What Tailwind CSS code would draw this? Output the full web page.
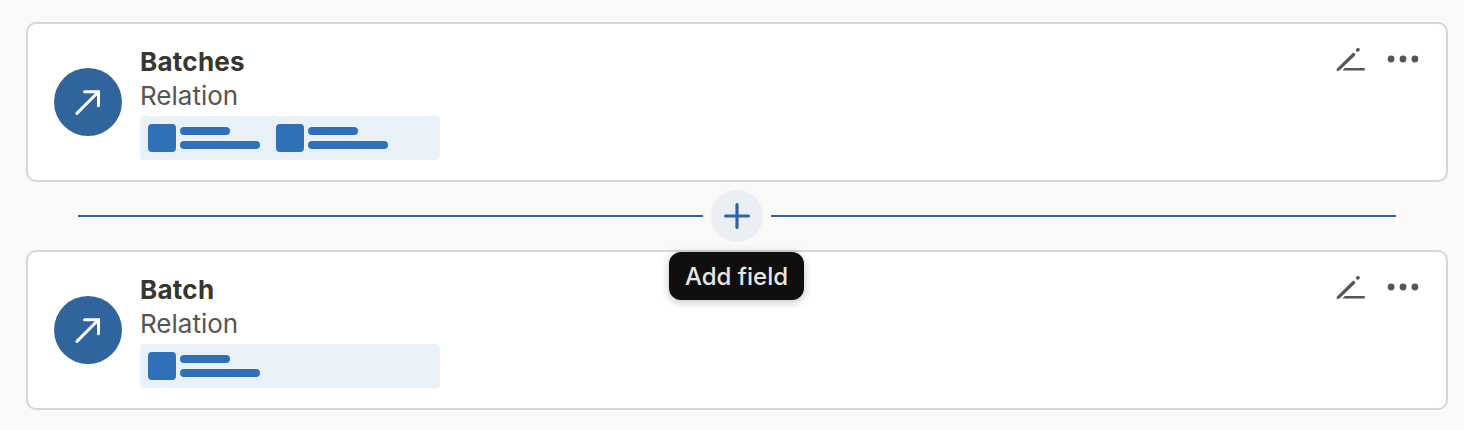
<!DOCTYPE html>
<html lang="en">
<head>
  <meta charset="UTF-8" />
  <meta name="viewport" content="width=device-width, initial-scale=1.0"/>
  <title>Fields</title>
  <script src="https://cdn.jsdelivr.net/npm/@tailwindcss/browser@4"></script>
</head>
<body class="bg-[#f9f9f7] font-['Inter','Liberation_Sans',sans-serif] text-[#56554f]">
  <main class="pt-[22px] pl-[26px] pr-4">

    <section class="flex h-40 items-center rounded-[10px] border-2 border-[#d1d7dd] bg-white py-5 pr-7 pl-[26px]">
      <div class="flex size-[68px] shrink-0 items-center justify-center rounded-full bg-[#2f649d]">
        <svg class="size-[68px]" viewBox="0 0 68 68" fill="none" stroke="#fff" stroke-width="3" stroke-linecap="round" stroke-linejoin="miter">
          <path d="M22.9 45.4 44.5 23.8M30.6 23.8H44.5V37.7"/>
        </svg>
      </div>
      <div class="ml-[18px] grow">
        <h2 class="h-[34px] text-[26px] leading-[36px] font-bold tracking-[0.26px] text-[#37362f]"><span>Batches</span></h2>
        <p class="h-[34px] text-[26px] leading-[36px]"><span>Relation</span></p>
        <div class="mt-1 flex h-11 w-[300px] items-center gap-4 rounded bg-[#e8f0f8] px-2">
          <div class="flex items-center gap-1">
            <div class="size-7 rounded bg-[#3070b8]"></div>
            <div class="flex flex-col gap-1.5">
              <div class="h-2 w-[50px] rounded-full bg-[#3070b8]"></div>
              <div class="h-2 w-20 rounded-full bg-[#3070b8]"></div>
            </div>
          </div>
          <div class="flex items-center gap-1">
            <div class="size-7 rounded bg-[#3070b8]"></div>
            <div class="flex flex-col gap-1.5">
              <div class="h-2 w-[50px] rounded-full bg-[#3070b8]"></div>
              <div class="h-2 w-20 rounded-full bg-[#3070b8]"></div>
            </div>
          </div>
        </div>
      </div>
      <div class="flex gap-5 self-start">
        <button aria-label="Edit">
          <svg class="h-8 w-8" viewBox="0 0 32 32" fill="#56554f">
            <path d="M3.3 24.4 18.7 9.3Q19.4 8.6 20.1 9.3L20.9 10.1Q21.5 10.8 20.9 11.4L5.6 26.1 3.6 26.8Q2.7 26.9 2.8 26Z" stroke="#56554f" stroke-width="0.5"/>
            <path d="M22.9 5.7 23.7 4.9Q24 4.6 24.3 4.9L24.8 5.4Q25.1 5.7 24.8 6L24 6.8Q23.7 7 23.4 6.8L22.9 6.3Q22.6 6 22.9 5.7Z" stroke="#56554f" stroke-width="1.8" stroke-linejoin="round"/>
            <path d="M8.4 26.6 10.8 24.1H29.7A1.25 1.25 0 0 1 29.7 26.6Z"/>
          </svg>
        </button>
        <button aria-label="More">
          <svg class="h-8 w-8 overflow-visible" viewBox="0 0 32 32" fill="#56554f">
            <circle cx="5.1" cy="15" r="3.4"/><circle cx="17" cy="15" r="3.4"/><circle cx="28.9" cy="15" r="3.4"/>
          </svg>
        </button>
      </div>
    </section>

    <div class="relative flex h-[68px] items-center gap-2 px-[52px]">
      <div class="h-0.5 grow bg-[#2f649d]"></div>
      <button class="size-[52px] rounded-full bg-[#ebeff3]" aria-label="Add field">
        <svg class="size-[52px]" viewBox="0 0 52 52" fill="none" stroke="#2f649d" stroke-width="3.2" stroke-linecap="round">
          <path d="M26 14.6V37.4M14.6 26H37.4"/>
        </svg>
      </button>
      <div class="h-0.5 grow bg-[#2f649d]"></div>
      <!-- tooltip -->
      <div class="absolute top-[70px] left-[643px] flex h-12 w-[135px] items-center justify-center rounded-xl bg-[#0f0f0f] pt-0.5 text-2xl font-medium whitespace-nowrap text-[#e6e6e5] shadow-[0_2px_8px_rgba(15,15,15,0.25)]"><span>Add field</span></div>
    </div>

    <section class="flex h-40 items-center rounded-[10px] border-2 border-[#d1d7dd] bg-white py-5 pr-7 pl-[26px]">
      <div class="flex size-[68px] shrink-0 items-center justify-center rounded-full bg-[#2f649d]">
        <svg class="size-[68px]" viewBox="0 0 68 68" fill="none" stroke="#fff" stroke-width="3" stroke-linecap="round" stroke-linejoin="miter">
          <path d="M22.9 45.4 44.5 23.8M30.6 23.8H44.5V37.7"/>
        </svg>
      </div>
      <div class="ml-[18px] grow">
        <h2 class="h-[34px] text-[26px] leading-[36px] font-bold tracking-[0.26px] text-[#37362f]"><span>Batch</span></h2>
        <p class="h-[34px] text-[26px] leading-[36px]"><span>Relation</span></p>
        <div class="mt-1 flex h-11 w-[300px] items-center gap-4 rounded bg-[#e8f0f8] px-2">
          <div class="flex items-center gap-1">
            <div class="size-7 rounded bg-[#3070b8]"></div>
            <div class="flex flex-col gap-1.5">
              <div class="h-2 w-[50px] rounded-full bg-[#3070b8]"></div>
              <div class="h-2 w-20 rounded-full bg-[#3070b8]"></div>
            </div>
          </div>
        </div>
      </div>
      <div class="flex gap-5 self-start">
        <button aria-label="Edit">
          <svg class="h-8 w-8" viewBox="0 0 32 32" fill="#56554f">
            <path d="M3.3 24.4 18.7 9.3Q19.4 8.6 20.1 9.3L20.9 10.1Q21.5 10.8 20.9 11.4L5.6 26.1 3.6 26.8Q2.7 26.9 2.8 26Z" stroke="#56554f" stroke-width="0.5"/>
            <path d="M22.9 5.7 23.7 4.9Q24 4.6 24.3 4.9L24.8 5.4Q25.1 5.7 24.8 6L24 6.8Q23.7 7 23.4 6.8L22.9 6.3Q22.6 6 22.9 5.7Z" stroke="#56554f" stroke-width="1.8" stroke-linejoin="round"/>
            <path d="M8.4 26.6 10.8 24.1H29.7A1.25 1.25 0 0 1 29.7 26.6Z"/>
          </svg>
        </button>
        <button aria-label="More">
          <svg class="h-8 w-8 overflow-visible" viewBox="0 0 32 32" fill="#56554f">
            <circle cx="5.1" cy="15" r="3.4"/><circle cx="17" cy="15" r="3.4"/><circle cx="28.9" cy="15" r="3.4"/>
          </svg>
        </button>
      </div>
    </section>

  </main>
</body>
</html>
